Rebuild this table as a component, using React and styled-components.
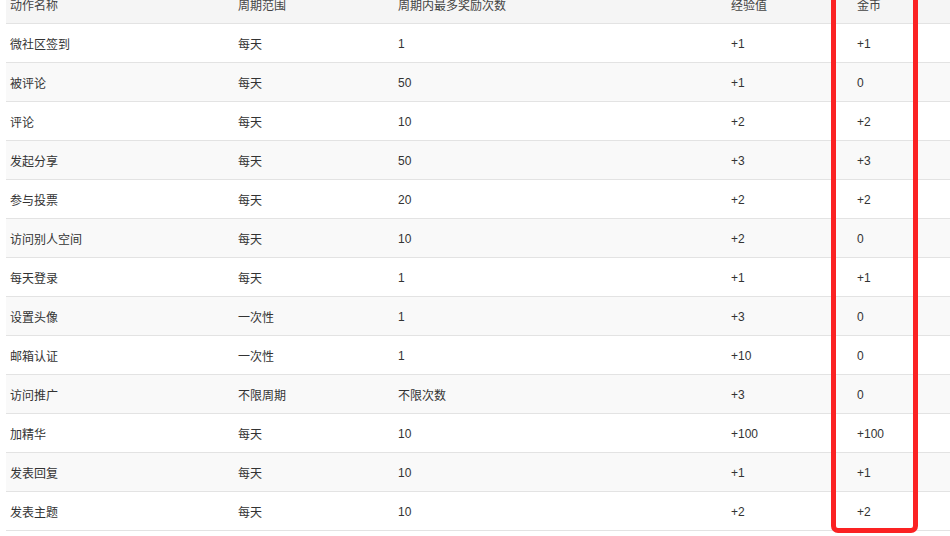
import React from "react";
import styled, { createGlobalStyle } from "styled-components";

const Global = createGlobalStyle`
  html, body { margin: 0; padding: 0; background: #fff; }
  body { overflow: hidden; width: 950px; height: 536px; }
`;

const Page = styled.div`
  position: relative;
  width: 950px;
  height: 536px;
  overflow: hidden;
  padding-left: 6px;
  box-sizing: border-box;
  font-family: "Liberation Sans", "Noto Sans CJK SC", sans-serif;
  font-size: 12px;
  color: #333;
`;

const Table = styled.div`
  margin-top: -15px;
  width: 944px;
`;

const Row = styled.div`
  display: grid;
  grid-template-columns: 228px 160px 333px 126px 1fr;
  height: 38px;
  align-items: center;
  border-bottom: 1px solid #e3e3e3;
  background: ${(p) => (p.$head ? "#f5f5f5" : p.$alt ? "#f9f9f9" : "#ffffff")};
`;

const Cell = styled.div`
  padding-left: 4px;
  padding-top: 1px;
  white-space: nowrap;
  color: ${(p) => (p.$head ? "#444" : "#333")};
`;

const Highlight = styled.div`
  position: absolute;
  left: 831px;
  top: -20px;
  width: 87px;
  height: 553px;
  box-sizing: border-box;
  border: 5px solid #fb2223;
  border-radius: 7px;
  pointer-events: none;
`;

const head = ["动作名称", "周期范围", "周期内最多奖励次数", "经验值", "金币"];
const rows = [
  ["微社区签到", "每天", "1", "+1", "+1"],
  ["被评论", "每天", "50", "+1", "0"],
  ["评论", "每天", "10", "+2", "+2"],
  ["发起分享", "每天", "50", "+3", "+3"],
  ["参与投票", "每天", "20", "+2", "+2"],
  ["访问别人空间", "每天", "10", "+2", "0"],
  ["每天登录", "每天", "1", "+1", "+1"],
  ["设置头像", "一次性", "1", "+3", "0"],
  ["邮箱认证", "一次性", "1", "+10", "0"],
  ["访问推广", "不限周期", "不限次数", "+3", "0"],
  ["加精华", "每天", "10", "+100", "+100"],
  ["发表回复", "每天", "10", "+1", "+1"],
  ["发表主题", "每天", "10", "+2", "+2"],
];

export default function App() {
  return (
    <>
      <Global />
      <Page>
        <Table>
          <Row $head>
            {head.map((h) => (
              <Cell $head key={h}>{h}</Cell>
            ))}
          </Row>
          {rows.map((r, i) => (
            <Row key={i} $alt={i % 2 === 1}>
              {r.map((c, j) => (
                <Cell key={j}>{c}</Cell>
              ))}
            </Row>
          ))}
        </Table>
        <Highlight />
      </Page>
    </>
  );
}
